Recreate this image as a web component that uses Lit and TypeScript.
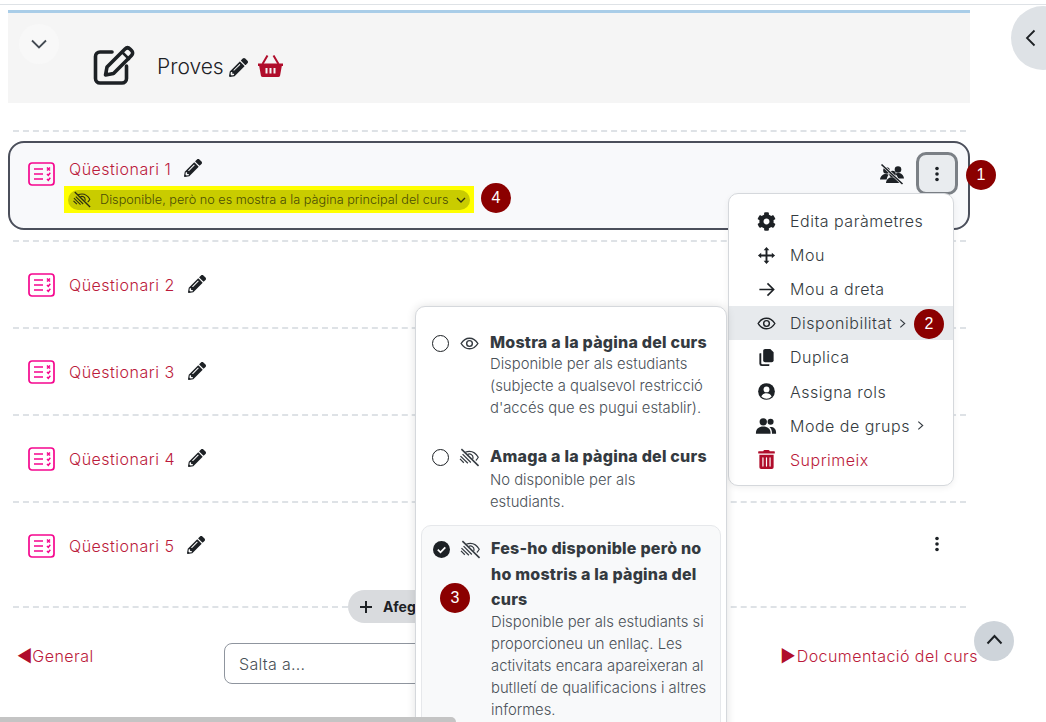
import { LitElement, html, css, svg } from "lit";
import { customElement } from "lit/decorators.js";

const PENCIL = "M497.9 142.1l-46.1 46.1c-4.7 4.7-12.3 4.7-17 0l-111-111c-4.7-4.7-4.7-12.3 0-17l46.1-46.1c18.7-18.7 49.1-18.7 67.9 0l60.1 60.1c18.8 18.7 18.8 49.1 0 67.9zM284.2 99.8L21.6 362.4.4 483.9c-2.9 16.4 11.4 30.6 27.8 27.8l121.5-21.3 262.6-262.6c4.7-4.7 4.7-12.3 0-17l-111-111c-4.8-4.7-12.4-4.7-17.1 0zM124.1 339.9c-5.5-5.5-5.5-14.3 0-19.8l154-154c5.5-5.5 14.3-5.5 19.8 0s5.5 14.3 0 19.8l-154 154c-5.5 5.5-14.3 5.5-19.8 0zM88 424h48v36.3l-64.5 11.3-31.1-31.1L51.7 376H88v48z";
const COG = "M487.4 315.7l-42.6-24.6c4.3-23.2 4.3-47 0-70.2l42.6-24.6c4.9-2.8 7.1-8.6 5.5-14-11.1-35.6-30-67.8-54.7-94.6-3.8-4.1-10-5.1-14.8-2.3L380.8 110c-17.9-15.4-38.5-27.3-60.8-35.1V25.8c0-5.6-3.9-10.5-9.4-11.7-36.7-8.2-74.3-7.8-109.2 0-5.5 1.2-9.4 6.1-9.4 11.7V75c-22.2 7.9-42.8 19.8-60.8 35.1L88.7 85.5c-4.9-2.8-11-1.9-14.8 2.3-24.7 26.7-43.6 58.9-54.7 94.6-1.7 5.4.6 11.2 5.5 14L67.3 221c-4.3 23.2-4.3 47 0 70.2l-42.6 24.6c-4.9 2.8-7.1 8.6-5.5 14 11.1 35.6 30 67.8 54.7 94.6 3.8 4.1 10 5.1 14.8 2.3l42.6-24.6c17.9 15.4 38.5 27.3 60.8 35.1v49.2c0 5.6 3.9 10.5 9.4 11.7 36.7 8.2 74.3 7.8 109.2 0 5.5-1.2 9.4-6.1 9.4-11.7v-49.2c22.2-7.9 42.8-19.8 60.8-35.1l42.6 24.6c4.9 2.8 11 1.9 14.8-2.3 24.7-26.7 43.6-58.9 54.7-94.6 1.5-5.5-.7-11.3-5.6-14.1zM256 336c-44.1 0-80-35.9-80-80s35.9-80 80-80 80 35.9 80 80-35.9 80-80 80z";

const pencil = (cls = "pencil") => html`<svg class=${cls} viewBox="0 0 512 512"><path fill="currentColor" d=${PENCIL}/></svg>`;

const quizIcon = () => html`<svg class="quiz" viewBox="0 0 27 24" fill="none" stroke="#f5068e">
  <rect x="1" y="1" width="25" height="22" rx="3" stroke-width="1.700"/>
  <path d="M6 7h9M6 12h9M6 17h9" stroke-width="1.700"/>
  <path d="M19 5.500l3 3M22 5.500l-3 3M19 12l1.300 1.300 2-2.600M19 17l1.300 1.300 2-2.600" stroke-width="1.500"/>
</svg>`;

const eye = (cls = "i") => html`<svg class=${cls} viewBox="0 0 20 20" fill="none" stroke="currentColor" stroke-width="1.500">
  <path d="M1.200 10C3.500 6.200 6.500 4.400 10 4.400s6.500 1.800 8.800 5.600c-2.300 3.800-5.300 5.600-8.800 5.600S3.500 13.800 1.200 10z"/>
  <circle cx="10" cy="10" r="3"/>
</svg>`;

/* eye-low-vision: upper right eye outline, stripes across the lower left */
const eyeSlash = (cls = "i") => html`<svg class=${cls} viewBox="0 0 22 20" fill="none" stroke="currentColor" stroke-width="1.300">
  <path d="M2.500 1.200L20.500 18.800" stroke-width="1.600"/>
  <path d="M6.500 4.500C7.900 3.900 9.400 3.600 11 3.600c3.700 0 6.800 2.100 9.200 6.200-.7 1.300-1.500 2.400-2.500 3.300"/>
  <path d="M9 6.900a3.700 3.700 0 0 1 5.700 3.200c0 .5-.1 1-.3 1.400"/>
  <path d="M1.500 8.500l7.800 7.500M3.700 6.500l8.700 8.800M1 11.500l4 4"/>
</svg>`;

const chevron = (cls: string) => html`<svg class=${cls} viewBox="0 0 8 12" fill="none" stroke="currentColor" stroke-width="1.300"><path d="M1.500 1.500L6.500 6 1.500 10.500"/></svg>`;

const menuIcons: Record<string, unknown> = {
  cog: html`<svg class="mi" viewBox="0 0 512 512"><path fill="currentColor" d=${COG}/></svg>`,
  move: html`<svg class="mi" viewBox="0 0 20 20" fill="currentColor"><path d="M10 1l3 3.400h-2V9h4.600V7L19 10l-3.400 3v-2H11v4.600h2L10 19l-3-3.400h2V11H4.400v2L1 10l3.400-3v2H9V4.400H7z"/></svg>`,
  arrow: html`<svg class="mi" viewBox="0 0 20 20" fill="none" stroke="currentColor" stroke-width="1.700"><path d="M2.500 10h15M11 3.500l6.500 6.500-6.500 6.500"/></svg>`,
  eye: eye("mi"),
  copy: html`<svg class="mi" viewBox="0 0 20 20" fill="currentColor"><path d="M8.500 1H14l3.500 3.500V13a2 2 0 0 1-2 2h-7a2 2 0 0 1-2-2V3a2 2 0 0 1 2-2z"/><path d="M3 5.500h1.500V16a1 1 0 0 0 1 1h7.500v1.500a.5.5 0 0 1-.5.5H5a2.500 2.500 0 0 1-2.500-2.500V6a.5.5 0 0 1 .5-.5z"/></svg>`,
  user: html`<svg class="mi" viewBox="0 0 20 20"><circle cx="10" cy="10" r="8.800" fill="currentColor"/><circle cx="10" cy="7.800" r="3.100" fill="#fff"/><path d="M4.600 15.200c1-2.300 3-3.300 5.400-3.300s4.400 1 5.400 3.300A7.400 7.400 0 0 1 10 17.500a7.400 7.400 0 0 1-5.400-2.300z" fill="#fff"/></svg>`,
  users: html`<svg class="mi wide" viewBox="0 0 24 20" fill="currentColor"><circle cx="9" cy="6" r="4"/><circle cx="17" cy="6" r="3.300"/><path d="M1 18c0-4.500 3.300-7 8-7s8 2.500 8 7v1H1z"/><path d="M18.500 19v-1c0-2.800-1-4.800-2.800-6.300 4.300-.6 7.300 1.600 7.300 5.800V19z"/></svg>`,
  trash: html`<svg class="mi" viewBox="0 0 448 512"><path fill="currentColor" d="M32 464a48 48 0 0 0 48 48h288a48 48 0 0 0 48-48V128H32zm272-256a16 16 0 0 1 32 0v224a16 16 0 0 1-32 0zm-96 0a16 16 0 0 1 32 0v224a16 16 0 0 1-32 0zm-96 0a16 16 0 0 1 32 0v224a16 16 0 0 1-32 0zM432 32H312l-9.400-18.700A24 24 0 0 0 281.100 0H166.800a23.700 23.700 0 0 0-21.400 13.300L136 32H16A16 16 0 0 0 0 48v32a16 16 0 0 0 16 16h416a16 16 0 0 0 16-16V48a16 16 0 0 0-16-16z"/></svg>`,
};

const menu = [
  { icon: "cog", label: "Edita paràmetres" },
  { icon: "move", label: "Mou" },
  { icon: "arrow", label: "Mou a dreta" },
  { icon: "eye", label: "Disponibilitat", sub: true, active: true },
  { icon: "copy", label: "Duplica" },
  { icon: "user", label: "Assigna rols" },
  { icon: "users", label: "Mode de grups", sub: true },
  { icon: "trash", label: "Suprimeix", danger: true },
];

@customElement("app-root")
export class AppRoot extends LitElement {
  static styles = css`
    :host {
      display: block;
      position: relative;
      width: 1046px;
      height: 722px;
      overflow: hidden;
      background: #fff;
      font-family: Inter, "Liberation Sans", sans-serif;
      color: #1d2125;
      font-size: 15px;
    }
    .topline { height: 1px; background: #dee2e6; margin-top: 4px; }
    main { width: 962px; margin-left: 8px; padding-top: 5px; }
    .head {
      box-sizing: border-box;
      height: 93px;
      border-top: 3px solid #a9cde8;
      background: #f5f5f5;
      display: flex;
      align-items: flex-start;
      padding: 8px 0 0 11px;
    }
    .collapse {
      width: 40px; height: 40px; border-radius: 50%;
      background: #f8f8f8;
      display: flex; align-items: center; justify-content: center;
      color: #444b53;
      margin-top: 3px;
    }
    .collapse svg { width: 16px; height: 10px; }
    .title { display: flex; align-items: center; margin: 21px 0 0 35px; }
    .title .big { width: 42px; height: 42px; color: #1d2125; margin-top: 3px; margin-left: -1px; }
    .title .name { font-size: 21px; font-weight: 300; margin-left: 22px; color: #1d2125; margin-top: 3px; }
    .title .pencil { width: 19px; height: 19px; margin-left: 5px; margin-top: 5px; }
    .title .basket { width: 25px; height: 24px; margin-left: 10px; color: #b00d2b; margin-top: 2px; }
    .dash { border-top: 2px dashed #dee2e6; margin-left: 5px; margin-right: 4px; height: 0; }
    .first-dash { margin-top: 27px; }
    .activity {
      box-sizing: border-box;
      display: flex;
      align-items: flex-start;
      height: 89px;
      margin-top: 9px;
      margin-bottom: 10px;
      border: 2px solid #4b4f5b;
      border-radius: 16px;
      background: #f8f9fb;
      padding: 16px 10px 0 18px;
      position: relative;
    }
    .quiz { width: 27px; height: 24px; flex: none; }
    .activity > .quiz { margin-top: 3px; }
    .activity-body { margin-left: 14px; }
    .a-title { display: flex; align-items: center; color: #bb1a3b; font-weight: 300; font-size: 16px; height: 20px; letter-spacing: .5px; }
    .a-title .pencil { width: 18px; height: 18px; color: #1d2125; margin-left: 13px; margin-top: -3px; }
    .row {
      box-sizing: border-box;
      height: 85px;
      display: flex;
      align-items: center;
      padding: 0 31px 0 20px;
    }
    .row .a-title { margin-left: 14px; }
    .row .a-title .pencil { margin-left: 13px; margin-top: -2px; }
    .spacer { flex: 1; }
    .hl {
      background: #ffff00;
      margin: 7px 0 0 -5px;
      width: 410px;
      height: 27px;
      display: flex;
      align-items: center;
      padding: 0 4px;
      box-sizing: border-box;
    }
    .pill {
      flex: 1;
      height: 20px;
      border-radius: 10px;
      background: #c9cc00;
      display: flex;
      align-items: center;
      color: #4a4c05;
      font-size: 12.700px;
      font-weight: 300;
      padding-left: 4px;
    }
    .pill .i { width: 20px; height: 17px; color: #2e2f10; margin-right: 8px; flex: none; }
    .pill span { flex: 1; white-space: nowrap; }
    .pill .down { width: 10px; height: 6px; margin-right: 4px; color: #2e2f10; }
    .right-tools { position: absolute; right: 10px; top: 9px; display: flex; align-items: center; }
    .nogroup { width: 24px; height: 24px; margin-right: 12px; color: #1d2125; }
    .kebab {
      box-sizing: border-box;
      width: 42px; height: 43px;
      border: 3px solid #7b8086;
      border-radius: 10px;
      background: #e9ecef;
      display: flex; align-items: center; justify-content: center;
    }
    .dots { width: 4px; height: 16px; color: #1d2125; }
    .row .dots { margin-top: -4px; }
    .add { position: relative; height: 0; margin-top: 18px; }
    .addbtn {
      position: absolute;
      top: -16px;
      left: 340px;
      height: 33px;
      border-radius: 17px;
      background: #d9dbde;
      display: flex;
      align-items: center;
      padding: 0 14px 0 11px;
      font-weight: 700;
      font-size: 14px;
      white-space: nowrap;
      color: #1d2125;
    }
    .addbtn svg { width: 14px; height: 14px; margin-right: 10px; }
    .footer {
      display: flex;
      align-items: flex-start;
      margin-top: 37px;
      width: 970px;
      color: #bb1a3b;
      font-weight: 300;
      font-size: 16px;
      letter-spacing: .45px;
    }
    .prev { box-sizing: border-box; width: 216px; padding-left: 9px; display: flex; align-items: center; height: 20px; margin-top: 3px; }
    .tri { color: #b00d2b; font-size: 17px; line-height: 1; letter-spacing: 0; }
    .next .tri { margin-right: 1px; }
    .select {
      width: 390px;
      height: 41px;
      box-sizing: border-box;
      border: 1px solid #8f959e;
      border-radius: 8px;
      color: #495057;
      font-size: 16px;
      letter-spacing: .3px;
      display: flex;
      align-items: center;
      padding-left: 14px;
    }
    .next { margin-left: auto; display: flex; align-items: center; height: 20px; margin-top: 3px; }
    .menu {
      position: absolute;
      left: 728px;
      top: 193px;
      width: 226px;
      box-sizing: border-box;
      background: #fff;
      border: 1px solid #d5d8dc;
      border-radius: 10px;
      padding: 10px 0 8px;
      box-shadow: 0 2px 6px rgba(0,0,0,.06);
    }
    .mitem {
      height: 34.100px;
      display: flex;
      align-items: center;
      padding-left: 28px;
      color: #343a40;
      font-size: 16px;
      letter-spacing: .5px;
      font-weight: 300;
      white-space: nowrap;
    }
    .mitem.active { background: #e7eaed; }
    .mitem.danger { color: #bb1a3b; }
    .mi { width: 19px; height: 19px; color: #1d2125; margin-right: 14px; flex: none; }
    .mi.wide { width: 22px; margin-left: -2px; margin-right: 13px; }
    .danger .mi { color: #b00d2b; }
    .sub { width: 7px; height: 11px; margin-left: 7px; color: #343a40; }
    .popup {
      position: absolute;
      left: 415px;
      top: 306px;
      width: 312px;
      height: 440px;
      box-sizing: border-box;
      background: #fff;
      border: 1px solid #d5d8dc;
      border-radius: 10px;
      box-shadow: 0 0 10px rgba(0,0,0,.12);
      padding: 23px 5px 0;
    }
    .opt { display: flex; align-items: flex-start; padding: 0 0 0 11px; }
    .opt.second { margin-top: 25px; }
    .opt.sel {
      margin-top: 12px;
      background: #f8f9fa;
      border: 1px solid #e6e8eb;
      border-radius: 10px;
      padding: 10px 0 0 11px;
      height: 300px;
      box-sizing: border-box;
    }
    .radio { width: 17px; height: 17px; box-sizing: border-box; border: 1.500px solid #1d2125; border-radius: 50%; flex: none; margin-top: 5px; }
    .check { width: 17px; height: 17px; flex: none; margin-top: 5px; }
    .opt .i { width: 21px; height: 19px; flex: none; margin: 4px 10px 0 10px; color: #343a40; }
    .opt.sel .i { margin-left: 10px; }
    .txt { width: 220px; flex: none; color: #495057; font-weight: 300; font-size: 14.800px; line-height: 22.200px; }
    .txt b { display: block; color: #343a40; font-weight: 800; font-size: 16px; line-height: 25.500px; letter-spacing: .22px; margin-bottom: -3px; }
    .second .txt b { margin-bottom: -1px; }
    .opt.sel .txt b { margin-bottom: -2px; }
    .n {
      position: absolute;
      width: 30px; height: 30px;
      border-radius: 50%;
      background: #8b0000;
      color: #fff;
      font-family: "Liberation Sans", sans-serif;
      font-size: 16px;
      display: flex; align-items: center; justify-content: center;
    }
    .drawer {
      position: absolute;
      left: 1011px; top: 6px;
      width: 64px; height: 64px;
      border-radius: 50%;
      background: #dee2e6;
      color: #1d2125;
      display: flex; align-items: center;
      padding-left: 14px;
      box-sizing: border-box;
    }
    .drawer svg { width: 11px; height: 18px; }
    .totop {
      position: absolute;
      left: 974px; top: 621px;
      width: 40px; height: 40px;
      border-radius: 50%;
      background: #ced4da;
      color: #1d2125;
      display: flex; align-items: center; justify-content: center;
    }
    .totop svg { width: 17px; height: 11px; margin-top: -4px; }
    .scroll {
      position: absolute;
      left: 0; top: 717px;
      width: 456px; height: 5px;
      background: #c4c4c4;
      border-radius: 0 6px 0 0;
    }
  `;

  private dots() {
    return svg`<svg class="dots" viewBox="0 0 4 16" fill="currentColor"><circle cx="2" cy="2.500" r="1.800"/><circle cx="2" cy="8" r="1.800"/><circle cx="2" cy="13.500" r="1.800"/></svg>`;
  }

  private row(n: number, kebab = false) {
    return html`<div class="row">
      ${quizIcon()}
      <div class="a-title">Qüestionari ${n}${pencil()}</div>
      <div class="spacer"></div>
      ${kebab ? this.dots() : ""}
    </div>`;
  }

  render() {
    return html`
      <div class="topline"></div>
      <main>
        <section class="head">
          <div class="collapse"><svg viewBox="0 0 16 10" fill="none" stroke="currentColor" stroke-width="1.800"><path d="M1 1.500l7 7 7-7"/></svg></div>
          <div class="title">
            <svg class="big" viewBox="0 0 42 42" fill="none" stroke="currentColor" stroke-width="3.600" stroke-linejoin="round" stroke-linecap="round">
              <path d="M19 7H7a4.500 4.500 0 0 0-4.500 4.500v22A4.500 4.500 0 0 0 7 38h22a4.500 4.500 0 0 0 4.500-4.500V21"/>
              <path d="M12.500 30l1.500-8L32 4c1.500-1.500 3.500-1.500 5 0l1.500 1.500c1.500 1.500 1.500 3.500 0 5L20.500 28.500z"/>
              <path d="M29 7l7 7" stroke-width="2.500"/>
            </svg>
            <span class="name">Proves</span>
            ${pencil()}
            <svg class="basket" viewBox="0 0 25 24" fill="currentColor">
              <path d="M0 9.500h25v2.600h-1.200l-1.700 9.300a2 2 0 0 1-2 1.600H4.900a2 2 0 0 1-2-1.600L1.200 12.100H0zM7.500 14v5.500h2V14zm4 0v5.500h2V14zm4 0v5.500h2V14z" fill-rule="evenodd"/>
              <path d="M4.500 10L9.500 1.500M20.500 10L15.500 1.500" stroke="currentColor" stroke-width="2" fill="none"/>
            </svg>
          </div>
        </section>
        <div class="dash first-dash"></div>
        <div class="activity">
          ${quizIcon()}
          <div class="activity-body">
            <div class="a-title">Qüestionari 1${pencil()}</div>
            <div class="hl"><div class="pill">
              ${eyeSlash()}
              <span>Disponible, però no es mostra a la pàgina principal del curs</span>
              <svg class="down" viewBox="0 0 10 6" fill="none" stroke="currentColor" stroke-width="1.300"><path d="M1 1l4 4 4-4"/></svg>
            </div></div>
          </div>
          <div class="right-tools">
            <svg class="nogroup" viewBox="0 0 24 24" fill="currentColor">
              <circle cx="6.500" cy="8.500" r="3.300"/><circle cx="18" cy="7.500" r="3.300"/><circle cx="12.500" cy="12" r="3.200"/>
              <path d="M0 17.500c.4-3.500 3-5.500 6-5.500 1.200 0 2 .2 2.700.6C7.800 14 7 15.700 6.700 17.500zM24 16.500c-.3-3.500-2.800-5.500-6-5.500-1.100 0-2 .3-2.900.7 1.200 1 2.700 3 3 4.800zM6 21c.3-3.800 3-5.800 6.500-5.800s6.200 2 6.500 5.800z"/>
              <path d="M3 3.800L21.500 21" stroke="#f8f9fb" stroke-width="2.600"/>
              <path d="M1.500 2.500L22.500 22" stroke="currentColor" stroke-width="1.600"/>
            </svg>
            <div class="kebab">${this.dots()}</div>
          </div>
        </div>
        <div class="dash"></div>
        ${this.row(2)}
        <div class="dash"></div>
        ${this.row(3)}
        <div class="dash"></div>
        ${this.row(4)}
        <div class="dash"></div>
        ${this.row(5, true)}
        <div class="add">
          <div class="dash"></div>
          <div class="addbtn"><svg viewBox="0 0 14 14" fill="none" stroke="currentColor" stroke-width="2"><path d="M7 1v12M1 7h12"/></svg>Afegeix</div>
        </div>
        <div class="footer">
          <div class="prev"><span class="tri">◀</span>General</div>
          <div class="select">Salta a...</div>
          <div class="next"><span class="tri">▶</span>Documentació del curs</div>
        </div>
      </main>

      <div class="drawer"><svg viewBox="0 0 11 18" fill="none" stroke="currentColor" stroke-width="1.800"><path d="M9.500 1.500L2 9l7.500 7.500"/></svg></div>
      <div class="totop"><svg viewBox="0 0 17 11" fill="none" stroke="currentColor" stroke-width="2"><path d="M1.500 9.500L8.500 2l7 7.500"/></svg></div>

      <div class="menu">
        ${menu.map(m => html`<div class="mitem ${m.active ? "active" : ""} ${m.danger ? "danger" : ""}">
          ${menuIcons[m.icon]}${m.label}${m.sub ? chevron("sub") : ""}
        </div>`)}
      </div>

      <div class="popup">
        <div class="opt">
          <div class="radio"></div>${eye()}
          <div class="txt"><b>Mostra a la pàgina del curs</b>Disponible per als estudiants (subjecte a qualsevol restricció d'accés que es pugui establir).</div>
        </div>
        <div class="opt second">
          <div class="radio"></div>${eyeSlash()}
          <div class="txt"><b>Amaga a la pàgina del curs</b>No disponible per als estudiants.</div>
        </div>
        <div class="opt sel">
          <svg class="check" viewBox="0 0 17 17"><circle cx="8.500" cy="8.500" r="8.500" fill="#1d2125"/><path d="M4.800 8.700l2.700 2.600 4.800-5" fill="none" stroke="#fff" stroke-width="1.800"/></svg>${eyeSlash()}
          <div class="txt"><b>Fes-ho disponible però no ho mostris a la pàgina del curs</b>Disponible per als estudiants si proporcioneu un enllaç. Les activitats encara apareixeran al butlletí de qualificacions i altres informes.</div>
        </div>
      </div>

      <div class="n" style="left:966px;top:160px">1</div>
      <div class="n" style="left:914px;top:309px">2</div>
      <div class="n" style="left:440px;top:583px">3</div>
      <div class="n" style="left:481px;top:183px">4</div>
      <div class="scroll"></div>
    `;
  }
}
